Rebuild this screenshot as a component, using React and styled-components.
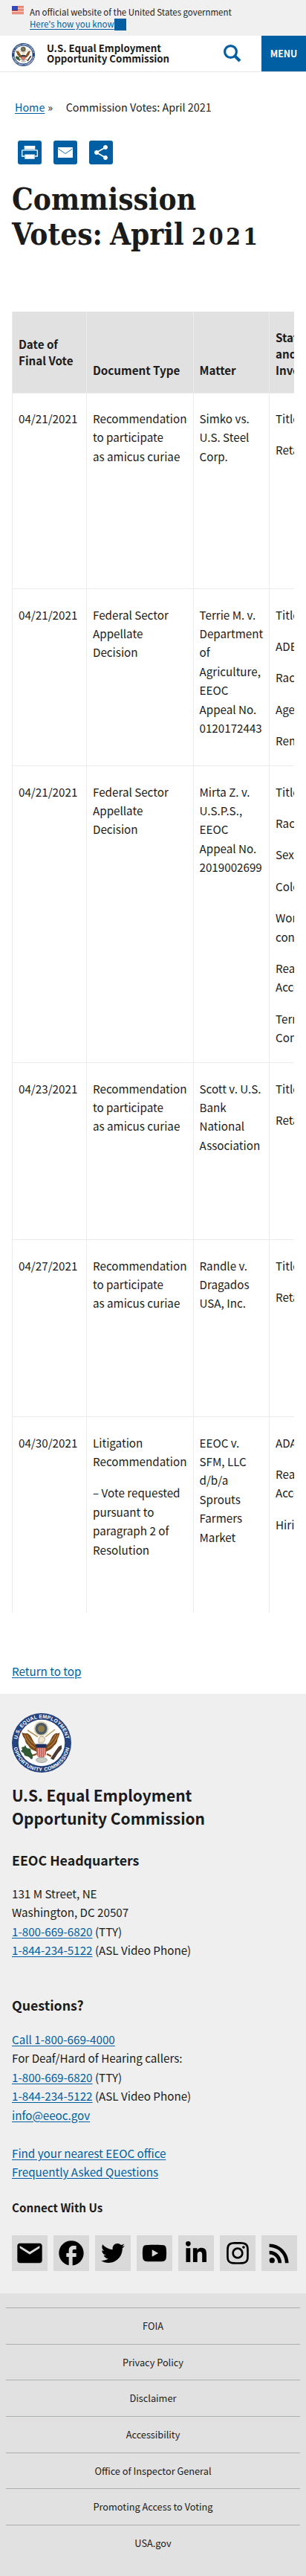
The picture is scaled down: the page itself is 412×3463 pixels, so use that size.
import React from "react";
import styled, { createGlobalStyle, css } from "styled-components";
import { MdEmail, MdFacebook, MdShare, MdRssFeed } from "react-icons/md";
import { FaTwitter, FaYoutube, FaLinkedinIn, FaInstagram } from "react-icons/fa";

const sans = `"Noto Sans CJK SC", "Open Sans", sans-serif`;

const Global = createGlobalStyle`
  * { box-sizing: border-box; }
  body { margin: 0; background: #fff; color: #1b1b1b; font-family: ${sans}; font-size: 15.19px; line-height: 25.44px; overflow-x: hidden; }
  h1, h2, h3, h4, p, ul { margin: 0; padding: 0; }
  ul { list-style: none; }
  svg { display: block; }
`;

const Page = styled.div`width: 412px; height: 3463px; display: flex; flex-direction: column; overflow: hidden;`;

const Link = styled.a`color: #005ea2; text-decoration: underline; text-underline-offset: 2px;`;

const Banner = styled.div`height: 48px; flex: none; background: #f0f0f0; display: flex; padding: 7.5px 16px 0; font-size: 11.46px; line-height: 16px; white-space: nowrap;
  svg { margin-right: 8px; margin-top: 0.5px; flex: none; }`;
const BannerLink = styled.div`display: flex; height: 16px;`;
const BannerToggle = styled.span`width: 16px; height: 16px; margin-top: 1px; background: #005ea2;`;

const Header = styled.header`height: 49px; flex: none; display: flex; border-bottom: 1px solid #e6e6e6; padding-left: 16px; align-items: flex-start;`;
const HeaderSeal = styled.div`width: 31px; margin: 10px 16px 0 0;`;
const HeaderTitle = styled.div`font-weight: 700; font-size: 13.3px; line-height: 14.2px; padding-top: 9.5px; flex: 1;`;
const SearchIcon = styled.svg`margin: 11px 27px 0 0;`;
const MenuButton = styled.button`width: 60px; height: 48px; border: 0; padding: 0; background: #005ea2; color: #fff; font: 700 12.3px/48px ${sans};`;

const Crumbs = styled.nav`display: flex; flex: none; padding: 35px 20px 0; font-size: 14.33px; line-height: 24px; height: 92px;
  span { margin-left: 4px; }
  b { font-weight: 400; margin-left: 17.5px; }`;

const ShareRow = styled.div`display: flex; gap: 16px; padding-left: 24px; height: 32px; flex: none;`;
const ShareButton = styled.button`width: 32px; height: 32px; padding: 0; border: 0; border-radius: 3px; background: #005ea2; color: #fff; display: grid; place-items: center;`;

const Title = styled.h1`font-family: "DejaVu Serif Condensed", "DejaVu Serif", serif; font-weight: 700; font-size: 40.2px; line-height: 46.9px; word-spacing: -2.5px; padding: 24px 16px 0; height: 198px; flex: none; white-space: nowrap;
  span { font-size: 31.5px; line-height: 1; letter-spacing: 3.4px; }`;

const TableWrap = styled.div`margin: 0 16px; overflow: hidden; flex: none; height: 1749px;`;
const Table = styled.table`border-collapse: collapse; table-layout: fixed; width: 480px;`;
const cell = css`border-left: 1.5px solid #ebebeb; padding: 0 4px 0 8px; text-align: left; vertical-align: top;`;
const Th = styled.th`${cell} background: #e1e1e1; height: 109px; line-height: 22.05px; font-weight: 700; padding-bottom: 19px; vertical-align: ${(p) => p.$align || "bottom"}; padding-top: ${(p) => (p.$align ? "19px" : 0)};`;
const Td = styled.td`${cell} border-top: 1px solid #ebebeb; padding-top: 21.5px; white-space: nowrap;
  p + p { margin-top: 16.96px; }`;
const Row = styled.tr`height: ${(p) => p.$h}px;`;

const ReturnTop = styled.div`padding: 66px 16px 0; height: 108.5px; flex: none;`;

const Footer = styled.footer`background: #efefef; padding: 26.5px 16px 0; height: 806.5px; flex: none;`;
const FooterName = styled.h2`font-size: 20.95px; line-height: 31px; margin-top: 15px;`;
const FooterHead = styled.h3`font-size: 17.75px; line-height: 24px; margin-top: ${(p) => p.$top}px; margin-bottom: ${(p) => p.$bottom}px;`;
const FooterLines = styled.div`margin-bottom: ${(p) => p.$gap || 0}px; white-space: nowrap;`;
const Connect = styled.h4`font-size: 15.19px; line-height: 24px;`;
const Social = styled.ul`display: flex; gap: 8px; margin-top: 25.6px;
  li { width: 48px; height: 48px; flex: none; background: #d9d9d9; color: #000; display: grid; place-items: center; }`;

const Legal = styled.ul`&& { padding: 19.3px 8px 0; } background: #e1e1e1; flex: 1;
  li { height: 48.57px; border-top: 1px solid #a9aeb1; text-align: center; font-size: 12.75px; line-height: 47px; }`;

const Flag = () => (
  <svg width="16" height="11" viewBox="0 0 16 11">
    <rect width="16" height="11" fill="#fff" />
    {[0, 2, 4, 6, 8, 10].map((y) => <rect key={y} y={y} width="16" height="1" fill="#db3e1f" />)}
    <rect width="8" height="6" fill="#1e33b1" />
    {[1, 3, 5].map((y) => [1, 3, 5, 7].map((x) => <circle key={`${x}${y}`} cx={x} cy={y} r=".4" fill="#fff" />))}
  </svg>
);

const PrintIcon = () => (
  <svg width="32" height="32" viewBox="0 0 32 32" fill="#fff">
    <path d="M8.7 7h14.600v4.700H8.700z" />
    <path d="M9 21H5.700v-7.300q0-.8.8-.8h19q.8 0 .8.8V21H23" fill="none" stroke="#fff" strokeWidth="1.3" />
    <path d="M9.300 18.600h13.400v6.100H9.300z" />
  </svg>
);

const MailIcon = () => (
  <svg width="32" height="32" viewBox="0 0 32 32">
    <rect x="6" y="9" width="20" height="14" rx=".6" fill="#fff" />
    <path d="M6.500 11L16 17.600l9.500-6.600" fill="none" stroke="#005ea2" strokeWidth=".9" />
  </svg>
);

const Seal = ({ size, id }) => (
  <svg width={size} height={size} viewBox="0 0 80 80">
    <defs>
      <path id={`${id}t`} d="M6.9 40a33.1 33.1 0 0 1 66.2 0" />
      <path id={`${id}b`} d="M2 40a38 38 0 0 0 76 0" />
    </defs>
    <circle cx="40" cy="40" r="40" fill="#25437c" />
    <circle cx="40" cy="40" r="31.2" fill="#fff" />
    <g fill="#fff" fontFamily="Liberation Sans" fontWeight="700" fontSize="6.8" textAnchor="middle">
      <text letterSpacing=".25"><textPath href={`#${id}t`} startOffset="50%">U.S. EQUAL EMPLOYMENT</textPath></text>
      <text letterSpacing=".5"><textPath href={`#${id}b`} startOffset="50%">OPPORTUNITY COMMISSION</textPath></text>
    </g>
    <path d="M13.5 26q4 2 7 1 4 1 7 8 2 5 6 8h13q4-3 6-8 3-7 7-8 3 1 5-1-1 6-3 9 0 5-5 9-3 5-9 7l-3 2h-10l-3-2q-7-2-9-7-5-4-5-9-3-3-4-9z" fill="#7a4a1c" />
    <path d="M17 29q4 12 14 18M20 29q4 9 11 13M62 29q-4 12-14 18M59 29q-4 9-11 13" stroke="#b98444" strokeWidth="1.1" fill="none" />
    <path d="M21 23l14 9M58 22l-13 10" stroke="#b79a5c" strokeWidth="1.5" />
    <path d="M36 40q-1-7 3-9 5 0 6 4l-3 5z" fill="#efe6cf" stroke="#9a7b4a" strokeWidth=".6" />
    <circle cx="39.5" cy="21" r="10" fill="#d8d2b4" />
    <circle cx="39.5" cy="21" r="8" fill="#4c5967" />
    <circle cx="39.5" cy="21" r="4.6" fill="#8f7d48" />
    <path d="M33 46h13v9q-1 4-6.500 5.500-5.500-1.500-6.500-5.500z" fill="#c9584e" />
    <path d="M35.500 47v11M38.200 47v13M41 47v13M43.700 47v11" stroke="#f3d6cf" strokeWidth=".8" />
    <path d="M32.500 41.500h14v5h-14z" fill="#1d2f5e" />
    <path d="M28 57l5-2M47 55l6 3" stroke="#7a4a1c" strokeWidth="2.2" />
    <ellipse cx="40" cy="63" rx="7.5" ry="3.6" fill="#c9c9c4" stroke="#8b8b86" strokeWidth=".7" />
    <path d="M13 46l4-1 1-2 2 4 5 1 1 5 2 3 0 5-2 1-3-3-6-2-1-3-4-3 2-2z" fill="#2f5a35" />
    <path d="M67 43l-4 2-5 7-6 9 4 2 6-9 5-6z" fill="#4b3b33" />
  </svg>
);

const Lines = ({ items }) => items.map((l, i) => <React.Fragment key={i}>{i > 0 && <br />}{l}</React.Fragment>);
const Paras = ({ items }) => items.map((p, i) => <p key={i}><Lines items={p} /></p>);

const participate = [["Recommendation", "to participate", "as amicus curiae"]];
const appellate = [["Federal Sector", "Appellate", "Decision"]];
const votes = [
  { h: 263.6, date: "04/21/2021", type: participate, matter: [["Simko vs.", "U.S. Steel", "Corp."]], issues: [["Title VII"], ["Retaliation"]] },
  { h: 238, date: "04/21/2021", type: appellate, matter: [["Terrie M. v.", "Department", "of", "Agriculture,", "EEOC", "Appeal No.", "0120172443"]], issues: [["Title VII"], ["ADEA"], ["Race"], ["Age"], ["Remedies"]] },
  { h: 399, date: "04/21/2021", type: appellate, matter: [["Mirta Z. v.", "U.S.P.S.,", "EEOC", "Appeal No.", "2019002699"]], issues: [["Title VII"], ["Race"], ["Sex"], ["Color"], ["Working", "conditions"], ["Reasonable", "Accommodation"], ["Terms and", "Conditions"]] },
  { h: 238, date: "04/23/2021", type: participate, matter: [["Scott v. U.S.", "Bank", "National", "Association"]], issues: [["Title VII"], ["Retaliation"]] },
  { h: 238, date: "04/27/2021", type: participate, matter: [["Randle v.", "Dragados", "USA, Inc."]], issues: [["Title VII"], ["Retaliation"]] },
  { h: 263.4, date: "04/30/2021", type: [["Litigation", "Recommendation"], ["– Vote requested", "pursuant to", "paragraph 2 of", "Resolution"]], matter: [["EEOC v.", "SFM, LLC", "d/b/a", "Sprouts", "Farmers", "Market"]], issues: [["ADA"], ["Reasonable", "Accommodation"], ["Hiring"]] },
];

const legalLinks = ["FOIA", "Privacy Policy", "Disclaimer", "Accessibility", "Office of Inspector General", "Promoting Access to Voting", "USA.gov"];

export default function App() {
  return (
    <Page>
      <Global />
      <Banner>
        <Flag />
        <div>
          An official website of the United States government
          <BannerLink><Link href="#know">Here's how you know</Link><BannerToggle /></BannerLink>
        </div>
      </Banner>
      <Header>
        <HeaderSeal><Seal size={31} id="h" /></HeaderSeal>
        <HeaderTitle>U.S. Equal Employment<br />Opportunity Commission</HeaderTitle>
        <SearchIcon width="25" height="25" viewBox="0 0 25 25" fill="none" stroke="#005ea2">
          <circle cx="10.5" cy="10.5" r="7.9" strokeWidth="3.2" />
          <path d="M16 16l7 7" strokeWidth="4" />
        </SearchIcon>
        <MenuButton>MENU</MenuButton>
      </Header>
      <Crumbs><Link href="#home">Home</Link><span>»</span><b>Commission Votes: April 2021</b></Crumbs>
      <ShareRow>
        <ShareButton aria-label="Print"><PrintIcon /></ShareButton>
        <ShareButton aria-label="Email"><MailIcon /></ShareButton>
        <ShareButton aria-label="Share"><MdShare size={24} /></ShareButton>
      </ShareRow>
      <Title>Commission<br />Votes: April <span>2021</span></Title>
      <TableWrap>
        <Table>
          <colgroup><col style={{ width: 100 }} /><col style={{ width: 143.5 }} /><col style={{ width: 102.5 }} /><col /></colgroup>
          <thead>
            <tr><Th $align="middle">Date of<br />Final Vote</Th><Th>Document Type</Th><Th>Matter</Th><Th>Statutes<br />and Issues<br />Involved</Th></tr>
          </thead>
          <tbody>
            {votes.map((v, i) => (
              <Row key={i} $h={v.h}>
                <Td>{v.date}</Td><Td><Paras items={v.type} /></Td><Td><Paras items={v.matter} /></Td><Td><Paras items={v.issues} /></Td>
              </Row>
            ))}
          </tbody>
        </Table>
      </TableWrap>
      <ReturnTop><Link href="#top">Return to top</Link></ReturnTop>
      <Footer>
        <Seal size={80} id="f" />
        <FooterName>U.S. Equal Employment<br />Opportunity Commission</FooterName>
        <FooterHead $top={28} $bottom={21}>EEOC Headquarters</FooterHead>
        <FooterLines>
          131 M Street, NE<br />Washington, DC 20507<br />
          <Link href="#tty">1-800-669-6820</Link> (TTY)<br /><Link href="#asl">1-844-234-5122</Link> (ASL Video Phone)
        </FooterLines>
        <FooterHead $top={47.8} $bottom={22.5}>Questions?</FooterHead>
        <FooterLines $gap={25.44}>
          <Link href="#call">Call 1-800-669-4000</Link><br />For Deaf/Hard of Hearing callers:<br />
          <Link href="#tty">1-800-669-6820</Link> (TTY)<br /><Link href="#asl">1-844-234-5122</Link> (ASL Video Phone)<br /><Link href="#mail">info@eeoc.gov</Link>
        </FooterLines>
        <FooterLines $gap={22.8}>
          <Link href="#office">Find your nearest EEOC office</Link><br /><Link href="#faq">Frequently Asked Questions</Link>
        </FooterLines>
        <Connect>Connect With Us</Connect>
        <Social>
          <li><MdEmail size={40} /></li>
          <li><MdFacebook size={40} /></li>
          <li><FaTwitter size={32} /></li>
          <li><FaYoutube size={34} /></li>
          <li><FaLinkedinIn size={32} /></li>
          <li><FaInstagram size={34} /></li>
          <li><MdRssFeed size={40} /></li>
        </Social>
      </Footer>
      <Legal>
        {legalLinks.map((t) => <li key={t}>{t}</li>)}
      </Legal>
    </Page>
  );
}
